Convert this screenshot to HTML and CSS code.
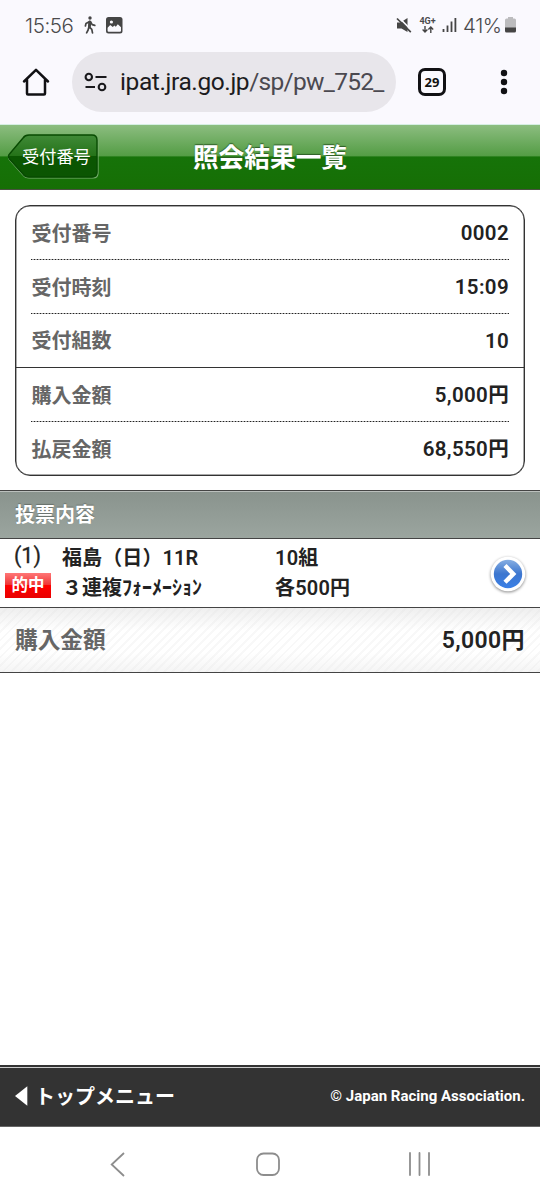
FILE: index.html
```html
<!DOCTYPE html>
<html lang="ja">
<head>
<meta charset="utf-8">
<title>照会結果一覧</title>
<link rel="stylesheet" href="styles.css">
</head>
<body>
<div class="status">
  <span class="clock">15:56</span>
  <svg class="walk" width="12" height="18" viewBox="0 0 12 18" fill="none" stroke="#454545" stroke-width="1.7" stroke-linecap="round" stroke-linejoin="round"><circle cx="6" cy="2" r="1.7" fill="#454545" stroke="none"/><path d="M5.6 5.7 4.9 11l-.8 3-1.5 2.8M5.4 11l2.4 2.4.7 3.4M4.8 6 2 7.5 1.4 10M6.6 5.8l1.6 2.8 2.6.8"/><path d="M5.9 5.8 5.4 11" stroke-width="2.800"/></svg>
  <svg class="photo" width="17" height="17" viewBox="0 0 17 17"><rect width="16.5" height="16.5" rx="2.5" fill="#454545"/><circle cx="5.400" cy="5" r="1.600" fill="#faf9fe"/><path d="M1.600 10.800 4.200 8l2.600 2 1.600-1.600 1.400 1.400 2-2.600 3.200 3v3.600q0 1-1 1H2.600q-1 0-1-1z" fill="#faf9fe"/></svg>
  <span class="space"></span>
  <svg class="mute" width="17" height="17" viewBox="0 0 17 17"><path d="M1 5.500h3.500L11.500 1v14L5.500 11.500H1z" fill="#454545"/><path d="M0 0 15.500 16" stroke="#faf9fe" stroke-width="1.600" transform="translate(1.500 -1)"/><path d="M1 1.500 14.800 15.200" stroke="#454545" stroke-width="1.700"/></svg>
  <span class="net"><b>4G+</b><svg width="12" height="7" viewBox="0 0 12 7" fill="none" stroke="#454545" stroke-width="1.4"><path d="M3 0v6M.6 3.600 3 6l2.400-2.400M8.800 7V1M6.400 3.400 8.800 1l2.400 2.400"/></svg></span>
  <svg class="signal" width="15" height="16" viewBox="0 0 15 16" stroke="#454545" stroke-width="1.800"><path d="M1.500 12v3M5.500 8.500V15M9.500 4.500V15M13.400 1V15"/></svg>
  <span class="percent">41%</span>
  <svg class="battery" width="11" height="16" viewBox="0 0 11 16"><path d="M3 0h5v1.500h1.500Q11 1.500 11 3v8H0V3q0-1.500 1.500-1.500H3z" fill="#bcbcbe"/><path d="M0 10.500h11V14q0 1.600-1.600 1.600H1.600Q0 15.600 0 14z" fill="#454545"/></svg>
</div>
<div class="browser">
  <svg class="home" width="28" height="28" viewBox="0 0 28 28" fill="none" stroke="#111114" stroke-width="2.500" stroke-linejoin="round" stroke-linecap="round"><path d="M2 13.500 14 1.800l12 11.700M5 11.500v14q0 1 1 1h16q1 0 1-1v-14"/></svg>
  <div class="address">
    <svg class="tune" width="24" height="20" viewBox="0 0 24 20" fill="none" stroke="#19191c" stroke-width="2.100"><circle cx="4.800" cy="5" r="3.200"/><path d="M11.500 5h11M1.500 15h9.500"/><circle cx="18" cy="15" r="3.300"/></svg>
    <span class="url">ipat.jra.go.jp<i>/sp/pw_752_</i></span>
  </div>
  <span class="tabs">29</span>
  <svg class="dots" width="8" height="26" viewBox="0 0 8 26" fill="#111114"><circle cx="4" cy="4" r="3.200"/><circle cx="4" cy="13" r="3.200"/><circle cx="4" cy="22" r="3.200"/></svg>
</div>
<header class="titlebar">
  <a class="back">
    <svg class="back-shape" width="92" height="47" viewBox="0 0 92 47"><defs><linearGradient id="g" x2="0" y2="1"><stop offset="0" stop-color="#408a38"/><stop offset=".49" stop-color="#257319"/><stop offset=".51" stop-color="#0b5602"/><stop offset="1" stop-color="#0b5502"/></linearGradient></defs><path d="M22 3h64q5 0 5 5v32q0 5-5 5H22q-4 0-6-3L2.500 27q-2-3 0-5L16 6q2-3 6-3z" fill="none" stroke="#79ad70" stroke-width="1.200"/><path d="M22 2h63q5 0 5 5v32q0 5-5 5H22q-4 0-6-3L2.500 26q-2-3 0-5L16 5q2-3 6-3z" fill="url(#g)" stroke="#084b02" stroke-width="1.400"/></svg>
    <span class="back-label">受付番号</span>
  </a>
  <h1 class="title">照会結果一覧</h1>
</header>
<main class="content">
  <dl class="card">
    <div class="row"><dt>受付番号</dt><dd>0002</dd></div>
    <div class="row"><dt>受付時刻</dt><dd>15:09</dd></div>
    <div class="row last"><dt>受付組数</dt><dd>10</dd></div>
    <div class="row"><dt>購入金額</dt><dd>5,000円</dd></div>
    <div class="row last"><dt>払戻金額</dt><dd>68,550円</dd></div>
  </dl>
  <h2 class="section">投票内容</h2>
  <div class="bet">
    <div class="mark"><span class="number">(1)</span><span class="hit">的中</span></div>
    <div class="race"><span>福島（日）11R</span><span class="kind">３連複ﾌｫｰﾒｰｼｮﾝ</span></div>
    <div class="stake"><span>10組</span><span>各500円</span></div>
    <svg class="go" width="40" height="42" viewBox="0 0 40 42"><defs><linearGradient id="b" x2="0" y2="1"><stop offset="0" stop-color="#86aee2"/><stop offset=".5" stop-color="#3c76cf"/><stop offset="1" stop-color="#3b80e6"/></linearGradient></defs><circle class="disc" cx="20" cy="20" r="17.300" fill="#fff"/><circle cx="20" cy="20" r="14.200" fill="url(#b)"/><path d="m17 11.500 8.300 8.400-8.300 8.400" fill="none" stroke="#fff" stroke-width="4.400"/></svg>
  </div>
  <div class="total"><span class="total-label">購入金額</span><span class="total-value">5,000円</span></div>
</main>
<footer class="footer">
  <svg width="13" height="20" viewBox="0 0 13 20"><path d="M0 10 12.300 .3v19.400z" fill="#fff"/></svg>
  <span class="menu">トップメニュー</span>
  <span class="copy">© Japan Racing Association.</span>
</footer>
<nav class="nav">
  <svg width="540" height="73" viewBox="0 0 540 73" fill="none" stroke="#8d8d8d" stroke-width="1.800"><path d="m124 26-12.300 11.500L124 49"/><rect x="257" y="26.500" width="22" height="21.500" rx="6.500"/><path d="M410 26v22M419.500 26v22M429 26v22" stroke-linecap="round"/></svg>
</nav>
</body>
</html>
```
FILE: styles.css
```css
* { box-sizing: border-box; }
body { margin: 0; width: 540px; height: 1199px; display: flex; flex-direction: column; background: #fff; color: #222; font-family: Roboto, "Noto Sans CJK JP", sans-serif; overflow: hidden; }
svg { display: block; flex: none; }
.status { height: 50px; display: flex; align-items: center; padding: 0 24px 0 25px; background: #faf9fe; color: #4b4b4d; white-space: nowrap; }
.clock, .percent { font: 300 20.500px/24px Inter, sans-serif; letter-spacing: -.4px; padding-top: 1px; }
.clock { width: 59px; }
.walk { margin-right: 10px; }
.space { flex: 1; }
.mute { margin-right: 6px; }
.net { width: 17px; display: flex; flex-direction: column; align-items: center; margin-right: 6px; }
.net b { font: 700 9px/9px Roboto, sans-serif; }
.percent { margin-left: 6px; width: 41px; }
.battery { margin-left: 1px; }
.browser { height: 75px; display: flex; align-items: flex-start; padding: 2px 32px 0 22px; background: #faf9fe; border-bottom: 1px solid #d5efe3; }
.home { margin-top: 16px; }
.address { width: 324px; height: 60px; margin-left: 22px; border-radius: 30px; background: #e8e6eb; display: flex; align-items: center; padding-left: 12px; white-space: nowrap; }
.url { margin-left: 12px; font: 400 24.500px/30px Roboto, sans-serif; color: #1c1b20; letter-spacing: -.4px; }
.url i { font-style: normal; color: #4b4950; letter-spacing: -.7px; }
.tabs { width: 28px; height: 28px; margin: 16px 0 0 22px; border: 3px solid #111114; border-radius: 7px; font: 700 13px/22px "Open Sans", sans-serif; text-align: center; color: #111; }
.dots { margin: 17px 0 0 auto; }
.titlebar { height: 65px; position: relative; background: linear-gradient(#8cbd80 0, #549d45 48%, #167309 50%, #166f05 100%); border-bottom: 1px solid #48513f; display: flex; align-items: center; justify-content: center; }
.title { margin: 0; padding-top: 1px; font-size: 25.700px; line-height: 38px; font-weight: 700; color: #fff; text-shadow: 0 -1px 1px #2e5e26; }
.back { position: absolute; left: 7px; top: 8px; width: 92px; height: 47px; color: #fff; }
.back-shape { position: absolute; left: 0; top: 0; }
.back-label { position: absolute; left: 15px; top: 11px; font-size: 17.200px; line-height: 26px; }
.content { flex: 1; }
.card { margin: 15px 15px 14px; height: 271px; border: 1px solid #333; border-radius: 15px; box-shadow: inset 0 0 0 .5px #555; }
.row { height: 54px; margin: 0 15px; display: flex; align-items: center; justify-content: space-between; background: repeating-linear-gradient(90deg, #222 0 1px, #aaa 1px 3px) left bottom / 100% 1px no-repeat; font-size: 20px; font-weight: 700; line-height: 30px; }
.row.last { background: none; }
.row.last:not(:last-child) { margin: 0; padding: 0 15px; border-bottom: 1px solid #333; }
.row dt { color: #666; padding-left: .4px; padding-top: 1px; }
.row dd { margin: 0; color: #222; font-size: 20.500px; font-weight: 600; letter-spacing: .35px; }
.section { margin: 0; height: 49px; padding-left: 15px; border-top: 1px solid #444; border-bottom: 1px solid #444; box-shadow: inset 0 1px #bbc0bd; background: linear-gradient(#89938d, #9ba59f); font-size: 20px; line-height: 49px; font-weight: 700; color: #fff; text-shadow: 0 -1px 1px #68706b; }
.bet { height: 69px; display: flex; border-bottom: 1px solid #444; font-size: 20px; font-weight: 600; line-height: 30px; white-space: nowrap; }
.mark { width: 62px; padding: 2px 0 0 5px; display: flex; flex-direction: column; }
.number { padding-left: 9px; font-weight: 400; font-size: 21.500px; line-height: 29px; -webkit-text-stroke: .3px #222; }
.hit { width: 46px; height: 25px; margin-top: 3px; background: linear-gradient(#f77 0, #e33 49%, #f00 50%, #e80000 100%); color: #fff; font-size: 16.500px; line-height: 25px; text-align: center; }
.race { width: 213px; padding-top: 4px; display: flex; flex-direction: column; letter-spacing: .1px; }
.kind { letter-spacing: 0; }
.stake { width: 213px; padding-top: 4px; display: flex; flex-direction: column; letter-spacing: .2px; }
.go { margin-top: 15px; }
.disc { filter: drop-shadow(0 1px 1.500px #888); }
.total { height: 65px; padding: 2px 15px 0; border-bottom: 1px solid #444; display: flex; justify-content: space-between; align-items: center; background: linear-gradient(rgba(225,225,225,.55), rgba(255,255,255,0) 35%, rgba(255,255,255,0) 70%, rgba(230,230,230,.4)), repeating-linear-gradient(135deg, #fff 0 4px, #f8f8f8 4px 6px); font-size: 22.700px; line-height: 34px; font-weight: 700; }
.total-label { color: #666; }
.total-value { font-size: 23px; font-weight: 600; letter-spacing: .4px; }
.footer { height: 62px; padding: 0 15px; background: #333; border-bottom: 1px solid #666; box-shadow: inset 0 2px #333, inset 0 3px #ccc; display: flex; align-items: center; color: #fff; font-weight: 700; }
.menu { margin-left: 7px; padding-top: 2px; font-size: 20px; line-height: 30px; }
.copy { margin-left: auto; font-size: 15px; line-height: 22px; }
.nav { height: 72px; }
```
